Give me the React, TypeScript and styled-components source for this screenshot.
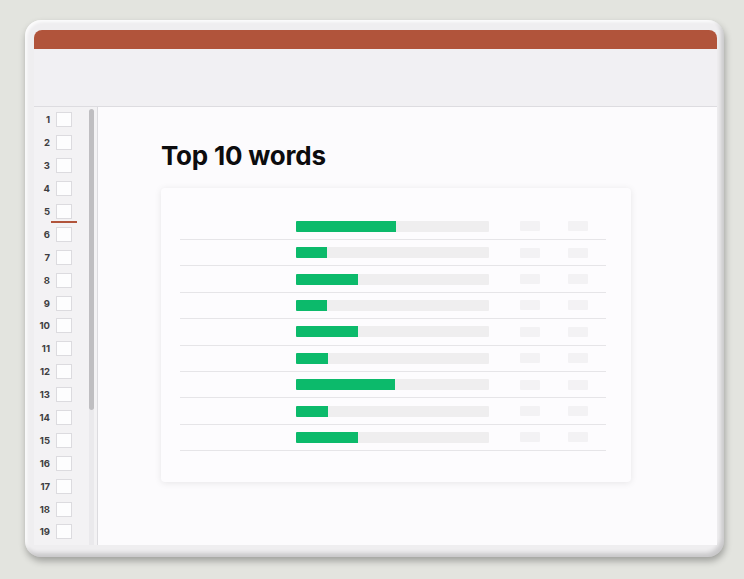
import React from "react";
import styled, { createGlobalStyle } from "styled-components";

const Global = createGlobalStyle`
  html, body { margin: 0; padding: 0; background: #e3e4df; }
  body { font-family: Inter, "Liberation Sans", sans-serif; width: 744px; height: 579px; overflow: hidden; }
`;

const Device = styled.div`
  margin: 20px 0 0 25px;
  width: 699px;
  height: 537px;
  box-sizing: border-box;
  padding: 10px 7px 12px 9px;
  background: #efeef0;
  border-radius: 16px;
  box-shadow: inset -3px -4px 4px rgba(0, 0, 0, 0.16), inset 2px 2px 3px rgba(255, 255, 255, 0.8),
    1px 4px 7px rgba(0, 0, 0, 0.3);
`;

const Screen = styled.div`
  height: 100%;
  display: flex;
  flex-direction: column;
  background: #fcfbfd;
  border-radius: 8px 8px 0 0;
  overflow: hidden;
`;

const TitleBar = styled.div`
  height: 19px;
  flex: none;
  background: #b1543b;
`;

const Ribbon = styled.div`
  height: 57px;
  flex: none;
  background: #f1f0f3;
  border-bottom: 1px solid #dddce0;
`;

const Body = styled.div`
  flex: 1;
  display: flex;
  min-height: 0;
`;

const Sidebar = styled.div`
  width: 63px;
  flex: none;
  display: flex;
  background: #f3f2f4;
  border-right: 1px solid #dcdbdf;
`;

const SlideList = styled.div`
  width: 52px;
  padding-top: 1.5px;
`;

const SlideRow = styled.div<{ $marked?: boolean }>`
  position: relative;
  height: 22.9px;
  display: flex;
  align-items: center;
  padding-left: 3px;
  gap: 6px;
  &::after {
    content: "";
    display: ${(p) => (p.$marked ? "block" : "none")};
    position: absolute;
    left: 17px;
    top: 21px;
    width: 26px;
    height: 2px;
    background: #b1543b;
  }
`;

const SlideNum = styled.span`
  width: 13px;
  text-align: right;
  font-size: 9.5px;
  font-weight: 700;
  color: #3e3e41;
`;

const Thumb = styled.div`
  width: 14px;
  height: 13px;
  background: #fdfdfe;
  border: 1px solid #dcdbdf;
`;

const ScrollTrack = styled.div`
  width: 11px;
  display: flex;
  flex-direction: column;
  align-items: center;
  padding-top: 2px;
`;

const ScrollThumb = styled.div`
  width: 5px;
  height: 301px;
  border-radius: 3px;
  background: #bfbec1;
`;

const ScrollRest = styled.div`
  width: 5px;
  flex: 1;
  background: #eae9ec;
`;

const Main = styled.div`
  flex: 1;
  background: #fcfbfd;
  padding: 34px 0 0 63px;
`;

const Title = styled.h1`
  margin: 0;
  font-family: Inter, "Liberation Sans", sans-serif;
  font-size: 26px;
  line-height: 30px;
  font-weight: 700;
  letter-spacing: -0.2px;
  color: #0c0c0e;
`;

const Card = styled.div`
  margin-top: 17px;
  width: 470px;
  height: 294px;
  box-sizing: border-box;
  padding: 25.6px 25px 0 19px;
  background: #fdfcfe;
  border-radius: 4px;
  box-shadow: 0 1px 7px rgba(0, 0, 0, 0.09);
`;

const Row = styled.div`
  height: 26.4px;
  box-sizing: border-box;
  display: flex;
  align-items: center;
  padding-left: 116px;
  border-bottom: 1px solid #e6e5e8;
`;

const Track = styled.div`
  width: 193px;
  height: 11px;
  background: #efeeef;
  border-radius: 1px;
  overflow: hidden;
`;

const Fill = styled.div`
  height: 100%;
  background: #0cba6b;
`;

const Pill = styled.div<{ $gap: number }>`
  width: 20px;
  height: 10px;
  margin-left: ${(p) => p.$gap}px;
  background: #f3f2f4;
  border-radius: 1px;
`;

const widths = [100, 31, 62, 31, 62, 32, 99, 32, 62];

export default function App() {
  return (
    <>
      <Global />
      <Device>
        <Screen>
          <TitleBar />
          <Ribbon />
          <Body>
            <Sidebar>
              <SlideList>
                {Array.from({ length: 19 }, (_, i) => (
                  <SlideRow key={i} $marked={i === 4}>
                    <SlideNum>{i + 1}</SlideNum>
                    <Thumb />
                  </SlideRow>
                ))}
              </SlideList>
              <ScrollTrack>
                <ScrollThumb />
                <ScrollRest />
              </ScrollTrack>
            </Sidebar>
            <Main>
              <Title>Top 10 words</Title>
              <Card>
                {widths.map((w, i) => (
                  <Row key={i}>
                    <Track>
                      <Fill style={{ width: `${w}px` }} />
                    </Track>
                    <Pill $gap={31} />
                    <Pill $gap={28} />
                  </Row>
                ))}
              </Card>
            </Main>
          </Body>
        </Screen>
      </Device>
    </>
  );
}
